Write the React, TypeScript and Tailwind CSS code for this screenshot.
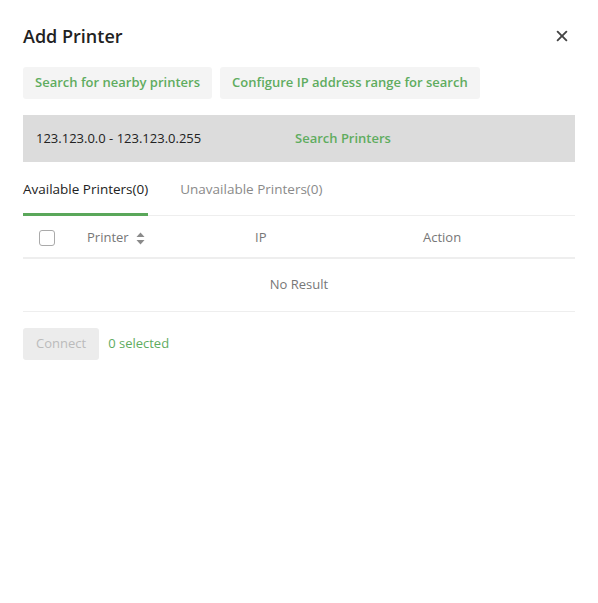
import { IoClose } from "react-icons/io5";

const SortIcon = () => (
    <svg width="9" height="13" viewBox="0 0 9 13" className="ml-[7px]">
        <path d="M4.5 0.5 L8.5 5 L0.5 5 Z" fill="#8a8a8a" />
        <path d="M4.5 12.5 L8.5 8 L0.5 8 Z" fill="#8a8a8a" />
    </svg>
)

const App = () => {
    return (
        <div className="w-[598px] h-[603px] bg-white px-[23px] text-[14px] text-[#333]" style={{ fontFamily: '"Open Sans", "Noto Sans", sans-serif' }}>
            <div className="flex items-center justify-between pt-[22px] h-[50px]">
                <h1 className="text-[18px] font-semibold text-[#222]">Add Printer</h1>
                <IoClose size={20} color="#444" className="mr-[3px]" />
            </div>

            <div className="flex gap-2 mt-[17px]">
                <button className="h-[32px] px-3 bg-[#f4f4f4] rounded-[3px] text-[#5fac5f] font-semibold text-[13px]">Search for nearby printers</button>
                <button className="h-[32px] px-3 bg-[#f4f4f4] rounded-[3px] text-[#5fac5f] font-semibold text-[13px]">Configure IP address range for search</button>
            </div>

            <div className="flex items-center h-[47px] mt-[16px] bg-[#dcdcdc] pl-[13px]">
                <span className="w-[259px] text-[13px] text-[#222]">123.123.0.0 - 123.123.0.255</span>
                <span className="text-[13px] font-semibold text-[#5fac5f]">Search Printers</span>
            </div>

            <div className="flex border-b border-[#eeeeee] mt-[17px] text-[13.5px] leading-[20px]">
                <div className="pb-[14px] border-b-[3px] border-[#5aa75a] text-[#222] font-medium -mb-px">Available Printers(0)</div>
                <div className="ml-[32px] text-[#8a8a8a]">Unavailable Printers(0)</div>
            </div>

            <div className="grid grid-cols-[52px_180px_168px_1fr] h-[43px] pt-[3px] items-center border-b-2 border-[#eeeeee] text-[13px] text-[#777]">
                <div className="pl-4">
                    <div className="w-[16px] h-[16px] border border-[#aaa] rounded-[3px]" />
                </div>
                <div className="flex items-center pl-3">Printer<SortIcon /></div>
                <div>IP</div>
                <div>Action</div>
            </div>
            <div className="flex items-center justify-center h-[53px] border-b border-[#eeeeee] text-[13px] text-[#777]">No Result</div>

            <div className="flex items-center gap-[9px] mt-[16px]">
                <button className="h-[32px] px-[13px] bg-[#ececec] rounded-[3px] text-[#bbbbbb] text-[13px]">Connect</button>
                <span className="text-[13px] text-[#5fac5f]">0 selected</span>
            </div>
        </div>
    )
}

export default App;
